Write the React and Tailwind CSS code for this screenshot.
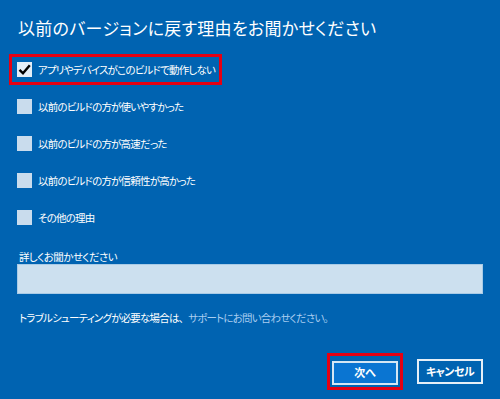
import React from "react";

const reasons = [
  "アプリやデバイスがこのビルドで動作しない",
  "以前のビルドの方が使いやすかった",
  "以前のビルドの方が高速だった",
  "以前のビルドの方が信頼性が高かった",
  "その他の理由",
];

const CheckBox = ({ checked }) => (
  <div
    className={
      "w-[15px] h-[15px] shrink-0 flex items-center justify-center " +
      (checked ? "bg-[#e4eef7]" : "bg-[#c9dced]")
    }
  >
    {checked && (
      <svg width="13" height="13" viewBox="0 0 13 13">
        <path d="M1.5 6.8 L5 10.3 L11.8 2.2" fill="none" stroke="#000" strokeWidth="2.4" />
      </svg>
    )}
  </div>
);

const App = () => {
  return (
    <div className="w-[500px] h-[399px] bg-[#0063b1] text-white flex flex-col px-[17px] font-['Noto_Sans_CJK_JP',sans-serif] [font-feature-settings:'palt'] overflow-hidden">
      <h1 className="mt-[16px] pl-[1px] text-[17px] leading-[24px] font-normal tracking-[0.3px]">
        以前のバージョンに戻す理由をお聞かせください
      </h1>

      <div className="mt-[11px] flex flex-col">
        {reasons.map((r, i) => (
          <div key={r} className="h-[37px] flex items-center">
            {i === 0 ? (
              <div className="-ml-[8px] w-[213px] h-[31px] border-[3px] border-[#e60012] pl-[5px] flex items-center gap-[6px]">
                <CheckBox checked />
                <span className="text-[10.5px] leading-[14px] tracking-[-0.8px] whitespace-nowrap">{r}</span>
              </div>
            ) : (
              <div className="flex items-center gap-[6px]">
                <CheckBox />
                <span className="text-[10.5px] leading-[14px] tracking-[-0.8px] whitespace-nowrap">{r}</span>
              </div>
            )}
          </div>
        ))}
      </div>

      <p className="mt-[14px] pl-[2px] text-[10.5px] leading-[14px] tracking-[-0.6px]">詳しくお聞かせください</p>
      <div className="h-[30px] bg-[#cce0ef] border border-[#a9cbe6]"></div>

      <p className="mt-[17px] pl-[2px] text-[10.5px] leading-[14px] tracking-[-0.8px] whitespace-nowrap">
        トラブルシューティングが必要な場合は、
        <span className="ml-[5px] text-[#a9cdf0]">サポートにお問い合わせください。</span>
      </p>

      <div className="mt-[28px] flex items-center justify-end gap-[14px]">
        <div className="border-[3px] border-[#e60012] p-[2px]">
          <button className="w-[66px] h-[24px] bg-[#0a75d2] border-2 border-[#d5e6f4] text-[11px] font-bold leading-none">
            次へ
          </button>
        </div>
        <button className="w-[66px] h-[25px] border-2 border-[#e6eff7] text-[11px] font-bold leading-none tracking-[-0.5px]">
          キャンセル
        </button>
      </div>
    </div>
  );
};

export default App;
